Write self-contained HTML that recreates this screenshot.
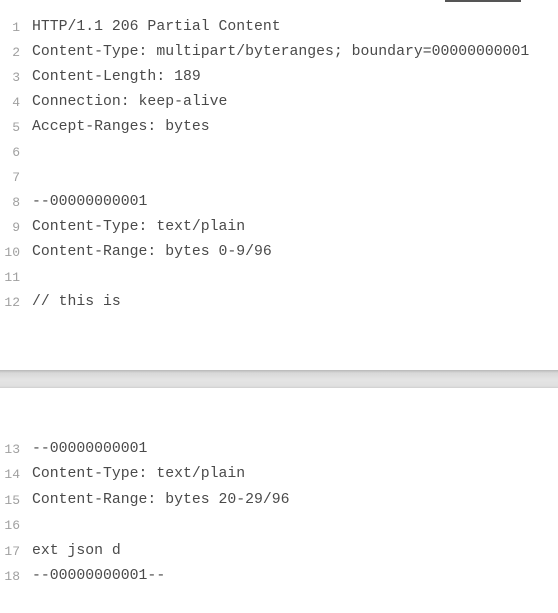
<!DOCTYPE html>
<html><head><style>
body{margin:0;width:558px;height:613px;background:#fff;position:relative;overflow:hidden;font-family:"Liberation Mono","DejaVu Sans Mono",monospace;}
.l{position:absolute;left:0;height:25px;line-height:25px;white-space:nowrap;}
.n{display:inline-block;width:20px;text-align:right;font-size:13px;color:#a0a0a0;vertical-align:top;}
.t{position:absolute;left:32px;top:0;font-size:14.8px;color:#4a4a4a;}
.band{position:absolute;left:0;top:370px;width:558px;height:18px;background:linear-gradient(#b8b8b8,#d8d8d8 3px,#e4e4e4 10px,#e0e0e0 16px,#cfcfcf);}
.top{position:absolute;left:445px;top:0;width:76px;height:2px;background:#555;}
</style></head><body>
<div class="top"></div>
<div class="l" style="top:15px"><span class="n">1</span><span class="t">HTTP/1.1 206 Partial Content</span></div>
<div class="l" style="top:40px"><span class="n">2</span><span class="t">Content-Type: multipart/byteranges; boundary=00000000001</span></div>
<div class="l" style="top:65px"><span class="n">3</span><span class="t">Content-Length: 189</span></div>
<div class="l" style="top:90px"><span class="n">4</span><span class="t">Connection: keep-alive</span></div>
<div class="l" style="top:115px"><span class="n">5</span><span class="t">Accept-Ranges: bytes</span></div>
<div class="l" style="top:140px"><span class="n">6</span></div>
<div class="l" style="top:165px"><span class="n">7</span></div>
<div class="l" style="top:190px"><span class="n">8</span><span class="t">--00000000001</span></div>
<div class="l" style="top:215px"><span class="n">9</span><span class="t">Content-Type: text/plain</span></div>
<div class="l" style="top:240px"><span class="n">10</span><span class="t">Content-Range: bytes 0-9/96</span></div>
<div class="l" style="top:265px"><span class="n">11</span></div>
<div class="l" style="top:290px"><span class="n">12</span><span class="t">// this is</span></div>
<div class="band"></div>
<div class="l" style="top:437px"><span class="n">13</span><span class="t">--00000000001</span></div>
<div class="l" style="top:462px"><span class="n">14</span><span class="t">Content-Type: text/plain</span></div>
<div class="l" style="top:488px"><span class="n">15</span><span class="t">Content-Range: bytes 20-29/96</span></div>
<div class="l" style="top:513px"><span class="n">16</span></div>
<div class="l" style="top:539px"><span class="n">17</span><span class="t">ext json d</span></div>
<div class="l" style="top:564px"><span class="n">18</span><span class="t">--00000000001--</span></div>
</body></html>
